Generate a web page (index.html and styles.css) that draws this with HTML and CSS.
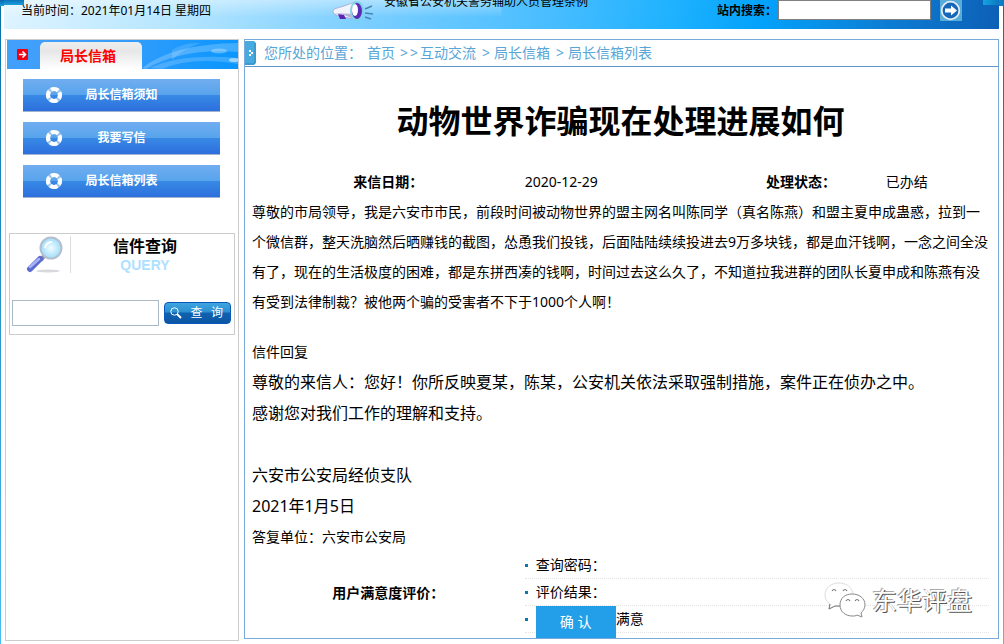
FILE: index.html
```html
<!DOCTYPE html>
<html lang="zh-CN">
<head>
<meta charset="utf-8">
<meta name="viewport" content="width=device-width, initial-scale=1">
<title>局长信箱</title>
<link rel="stylesheet" href="styles.css">
</head>
<body>
<div class="page">
  <header class="topbar">
    <span class="today">当前时间：2021年01月14日 星期四</span>
    <div class="notice">
      <svg class="horn" width="42" height="22" viewBox="0 0 42 22" aria-hidden="true">
        <path d="M2 9 Q0 11 2 14 L7 16 L22 19 L23 2 L12 6 Z" fill="#f3f3fb" stroke="#9aa0c8" stroke-width=".7"/>
        <path d="M2 13 L12 15 L22 19 L22 14 Z" fill="#b7b3d8"/>
        <path d="M6 14 L8 19 L14 19 L12 15Z" fill="#5a25b0"/>
        <ellipse cx="25" cy="11" rx="6" ry="9" fill="#5a2bb8" stroke="#7fd3e8" stroke-width="2"/>
        <ellipse cx="23" cy="10" rx="3" ry="6" fill="#fff"/>
        <path d="M33 9 L40 6 M33 13 L41 14 M33 17 L39 19" stroke="#4a86b4" stroke-width="1.6"/>
      </svg>
      <a class="headline" href="#">安徽省公安机关警务辅助人员管理条例</a>
    </div>
    <form class="site-search">
      <label for="site-q">站内搜索：</label>
      <input id="site-q" type="text">
      <button type="button" aria-label="搜索">
        <svg width="22" height="21" viewBox="0 0 22 21" aria-hidden="true">
          <rect width="22" height="21" fill="#58acd8"/>
          <circle cx="10.500" cy="10.500" r="8.800" fill="#1767b8" stroke="#e6eef6" stroke-width="1.800"/>
          <path d="M5 8.500h6V5.500l6 5-6 5v-3H5z" fill="#fff"/>
        </svg>
      </button>
    </form>
  </header>

  <div class="columns">
    <aside class="sidebar">
      <div class="side-head">
        <svg class="waves" viewBox="0 0 96 29" preserveAspectRatio="none" aria-hidden="true">
          <path d="M0 28 Q30 4 96 3 V12 Q40 8 4 29z" fill="#fff" opacity=".22"/>
          <path d="M8 28 Q40 13 96 18 V24 Q50 16 20 29z" fill="#fff" opacity=".18"/>
          <path d="M30 10 Q42 2 58 3 Q40 10 30 20z" fill="#fff" opacity=".14"/>
          <ellipse cx="77" cy="11" rx="8" ry="2.500" fill="#fff" opacity=".3"/>
          <ellipse cx="92" cy="20" rx="5" ry="2" fill="#fff" opacity=".5"/>
        </svg>
        <svg class="arrow" width="11" height="11" viewBox="0 0 11 11" aria-hidden="true">
          <rect width="11" height="11" rx="1" fill="#f00012"/>
          <path d="M2 5.500h6M5.500 2.500l3 3-3 3" fill="none" stroke="#fff" stroke-width="1.600"/>
        </svg>
        <h2 class="tab">局长信箱</h2>
      </div>
      <nav class="menu">
        <a href="#"><svg width="18" height="18" viewBox="0 0 18 18" aria-hidden="true"><circle cx="9" cy="9" r="6" fill="none" stroke="#9fc6ee" stroke-width="4.200"/><circle cx="9" cy="9" r="6" fill="none" stroke="#fff" stroke-width="4.200" stroke-dasharray="7.400 2.025" stroke-dashoffset="3.700"/></svg><span>局长信箱须知</span></a>
        <a href="#"><svg width="18" height="18" viewBox="0 0 18 18" aria-hidden="true"><circle cx="9" cy="9" r="6" fill="none" stroke="#9fc6ee" stroke-width="4.200"/><circle cx="9" cy="9" r="6" fill="none" stroke="#fff" stroke-width="4.200" stroke-dasharray="7.400 2.025" stroke-dashoffset="3.700"/></svg><span>我要写信</span></a>
        <a href="#"><svg width="18" height="18" viewBox="0 0 18 18" aria-hidden="true"><circle cx="9" cy="9" r="6" fill="none" stroke="#9fc6ee" stroke-width="4.200"/><circle cx="9" cy="9" r="6" fill="none" stroke="#fff" stroke-width="4.200" stroke-dasharray="7.400 2.025" stroke-dashoffset="3.700"/></svg><span>局长信箱列表</span></a>
      </nav>
      <form class="query">
        <div class="query-head">
          <svg width="40" height="40" viewBox="0 0 40 40" aria-hidden="true">
            <defs><radialGradient id="lens"><stop offset="0" stop-color="#f2fdff"/><stop offset="1" stop-color="#9fdcfa"/></radialGradient></defs>
            <ellipse cx="22" cy="35" rx="12" ry="1.500" fill="#d6d8dc"/>
            <path d="M18 20l-3 4" stroke="#8f9099" stroke-width="4"/>
            <path d="M14 23L4 33" stroke="#5c6bd0" stroke-width="6" stroke-linecap="round"/>
            <path d="M13 23L4 31" stroke="#a6b4f5" stroke-width="2.500" stroke-linecap="round"/>
            <circle cx="25" cy="12" r="10.500" fill="url(#lens)" stroke="#b4bfd0" stroke-width="2"/>
            <path d="M19 12q1-6 7-6" fill="none" stroke="#fff" stroke-width="2"/>
          </svg>
          <div class="query-title">
            <label for="letter-q">信件查询</label>
            <span>QUERY</span>
          </div>
        </div>
        <div class="query-row">
          <input id="letter-q" type="text">
          <button type="button">
            <svg width="12" height="12" viewBox="0 0 12 12" aria-hidden="true"><circle cx="4.500" cy="4.500" r="3.700" fill="none" stroke="#fff"/><path d="M7 7l4 4" stroke="#fff" stroke-width="2"/></svg>
            <span>查</span><span>询</span>
          </button>
        </div>
      </form>
    </aside>

    <main class="article">
      <nav class="crumbs">
        <svg width="11" height="24" viewBox="0 0 11 24" aria-hidden="true">
          <path d="M0 0h9l2 2v20l-2 2H0z" fill="#47abe0"/>
          <path d="M10 2v20l-1 1H0" fill="none" stroke="#3089bd"/>
          <path d="M4 9h2v2H4zM6 11h2v2H6zM4 13h2v2H4z" fill="#fff"/>
        </svg>
        <span class="where">您所处的位置：</span>
        <a class="home" href="#">首页</a><span class="sep first">&gt;</span><span class="sep">&gt;</span><a href="#">互动交流</a><span class="sep next">&gt;</span><a href="#">局长信箱</a><span class="sep next">&gt;</span><a href="#">局长信箱列表</a>
      </nav>

      <div class="letter">
        <h1>动物世界诈骗现在处理进展如何</h1>
        <table class="meta">
          <tr><th class="c-date">来信日期：</th><td class="c-value">2020-12-29</td><th class="c-state">处理状态：</th><td>已办结</td></tr>
        </table>
        <p class="body">尊敬的市局领导，我是六安市市民，前段时间被动物世界的盟主网名叫陈同学（真名陈燕）和盟主夏申成蛊惑，拉到一个微信群，整天洗脑然后晒赚钱的截图，怂恿我们投钱，后面陆陆续续投进去9万多块钱，都是血汗钱啊，一念之间全没有了，现在的生活极度的困难，都是东拼西凑的钱啊，时间过去这么久了，不知道拉我进群的团队长夏申成和陈燕有没有受到法律制裁？被他两个骗的受害者不下于1000个人啊！</p>
        <h2 class="reply-title">信件回复</h2>
        <div class="reply">
          <p>尊敬的来信人：您好！你所反映夏某，陈某，公安机关依法采取强制措施，案件正在侦办之中。</p>
          <p>感谢您对我们工作的理解和支持。</p>
          <p class="sign">六安市公安局经侦支队</p>
          <p>2021年1月5日</p>
        </div>
        <p class="unit">答复单位：六安市公安局</p>
        <div class="rating">
          <h3>用户满意度评价：</h3>
          <ul>
            <li>查询密码：</li>
            <li>评价结果：</li>
            <li><button type="button">确 认</button>满意</li>
          </ul>
        </div>
      </div>

      <div class="mark">
        <svg width="42" height="36" viewBox="0 0 42 36" aria-hidden="true">
          <path d="M15 1C7 1 1 6 1 13c0 4 2 7 5 9l-1 5 6-3c10 2 18-3 18-11S22 1 15 1z" fill="#fff" stroke="#ddd"/>
          <path d="M6 22l-1 5 6-3h5" fill="none" stroke="#777"/>
          <path d="M28 12c-7 0-12 4-12 11s6 11 12 11c2 0 4 0 5-1l5 2-1-4c2-2 4-5 4-8 0-7-6-11-13-11z" fill="#fff" stroke="#888"/>
          <path d="M8 9q2-3 4 0M19 9q2-3 4 0M22 19q2-3 4 0M31 19q2-3 4 0" fill="none" stroke="#777" stroke-width="1.200"/>
        </svg>
        <span>东华评盘</span>
      </div>
    </main>
  </div>
</div>
</body>
</html>
```
FILE: styles.css
```css
* { box-sizing: border-box; }
html, body { margin: 0; }
body {
  font: 14px/30px "Noto Sans", "Noto Sans CJK SC", sans-serif;
  color: #000;
  background: #fff;
}
h1, h2, h3, p, ul, form { margin: 0; padding: 0; }
a { color: inherit; text-decoration: none; }
svg { display: block; flex: none; }
button, input { font: inherit; margin: 0; padding: 0; }
button { cursor: pointer; }

.page {
  min-height: 100vh;
  padding: 0 5px 3px 4px;
  overflow: hidden;
  background:
    linear-gradient(#0a64b0, #1c9ddb) left top / 22px 6px no-repeat,
    linear-gradient(90deg, #12a4e0, #0d78c0) right top / 21px 6px no-repeat,
    linear-gradient(#0670a8, #47bdf3) left top / 1px 100% no-repeat,
    linear-gradient(#0670a8, #47bdf3) right top / 1px 100% no-repeat,
    #fff;
}

.topbar {
  display: flex;
  align-items: flex-start;
  height: 29px;
  padding: 0 37px 0 17px;
  font-size: 12px;
  line-height: 21px;
  overflow: hidden;
  background:
    linear-gradient(#0a74bb, #1c9ddb) left top / 20px 5px no-repeat,
    linear-gradient(90deg, #12a4e0, #0d78c0) right top / 16px 5px no-repeat,
    linear-gradient(rgba(255,255,255,.4), rgba(255,255,255,0) 60%) left top / 50% 100% no-repeat,
    linear-gradient(100deg, #dff4ff 0%, #b4e5ff 18%, #7fd0ff 35%, #48bdff 55%, #1fb2ff 67%, #03a2fb 76%, #0c7fd6 88%, #0d5fb5 100%);
}
.today { width: 311px; }
.notice { display: flex; flex: 1; gap: 10px; }
.headline { line-height: 3px; white-space: nowrap; }
.site-search { display: flex; align-items: flex-start; }
.site-search label { font-weight: bold; }
.site-search input {
  width: 153px;
  height: 20px;
  margin: 0 9px 0 1px;
  border: 1px solid #808080;
  background: #fff;
}
.site-search button { border: 0; background: none; }

.columns {
  display: flex;
  align-items: flex-start;
  gap: 5px;
  padding: 10px 0 0 1px;
}

.sidebar {
  width: 234px;
  min-height: 602px;
  border: 1px solid #ccc;
}
.side-head {
  position: relative;
  display: flex;
  align-items: center;
  gap: 12px;
  height: 29px;
  margin-left: 1px;
  padding-left: 10px;
  background: linear-gradient(100deg, #43a0fb, #359dfb 50%, #0796ff);
}
.waves { position: absolute; right: 0; top: 0; width: 96px; height: 29px; }
.tab {
  align-self: flex-end;
  width: 102px;
  padding-right: 6px;
  border-radius: 5px 5px 0 0;
  background: linear-gradient(#eee, #e7e7e7 35%, #fff);
  color: #f00;
  font-size: 14px;
  line-height: 27px;
  text-align: center;
}
.menu {
  display: grid;
  gap: 10px;
  padding: 10px 18px 0 17px;
}
.menu a {
  display: flex;
  align-items: center;
  height: 33px;
  padding-left: 22px;
  border-bottom: 1px solid #a3b2ce;
  background: linear-gradient(#71adf0, #57a4ec 50%, #388ae6 50%, #2d6fdd);
  color: #fff;
  font-size: 12px;
  font-weight: bold;
}
.menu span { width: 117px; text-align: center; }

.query {
  margin: 35px 3px 0 3px;
  padding: 2px 3px 8px 2px;
  border: 1px solid #ccc;
}
.query-head {
  display: flex;
  align-items: flex-start;
  padding-left: 14px;
}
.query-title {
  display: grid;
  flex: 1;
  margin-left: 4px;
  padding-right: 12px;
  border-left: 1px solid #ddd;
  text-align: center;
}
.query-title label { font-size: 16px; font-weight: bold; line-height: 21px; }
.query-title span { color: #b0e0ff; font: bold 14px/16px "Liberation Sans", sans-serif; }
.query-row {
  display: flex;
  align-items: center;
  gap: 5px;
  margin-top: 24px;
}
.query-row input {
  flex: 1;
  min-width: 0;
  height: 26px;
  border: 1px solid #a9b9c6;
  background: #fff;
}
.query-row button {
  display: flex;
  align-items: center;
  justify-content: space-between;
  width: 67px;
  height: 22px;
  padding: 0 7px 0 5px;
  border: 1px solid #0a59b8;
  border-radius: 4px;
  background: linear-gradient(#3da5e0, #2d8fd0 45%, #0f62af 50%, #0d56a4);
  color: #fff;
  font-size: 12px;
  line-height: 20px;
}

.article {
  position: relative;
  flex: 1;
  min-width: 0;
  border: 1px solid #78aadc;
}
.crumbs {
  display: flex;
  align-items: center;
  height: 27px;
  border-bottom: 1px solid #5d97d2;
  color: #58a5d8;
  line-height: 26px;
  white-space: nowrap;
}
.where { margin-left: 8px; }
.home { margin-left: 5px; }
.sep { width: 10px; }
.sep.first { margin-left: 5px; }
.sep.next { margin: 0 2px 0 6px; }

.letter { padding: 0 9px 5px 7px; }
h1 { margin: 30px 0 22px; font-size: 32px; line-height: 48px; text-align: center; }
.meta { width: 100%; table-layout: fixed; border-collapse: collapse; }
.meta th, .meta td { padding: 0; text-align: left; }
.meta th { text-align: center; }
.c-date { width: 37%; }
.c-value { width: 26%; }
.c-state { width: 23%; }
.reply-title { margin-top: 20px; font-size: 14px; font-weight: normal; }
.reply { font-size: 16px; line-height: 31px; }
.sign { margin-top: 31px; }

.rating { display: grid; grid-template-columns: 37fr 63fr; align-items: center; }
.rating h3 { font-size: 14px; text-align: center; }
.rating ul { list-style: none; }
.rating li {
  display: flex;
  align-items: flex-start;
  height: 27px;
  padding-left: 11px;
  border-bottom: 1px dotted #e4e4e4;
  background: linear-gradient(#0b78b0, #0b78b0) 0 12px / 3px 3px no-repeat;
  line-height: 26px;
}
.rating button {
  flex: none;
  width: 80px;
  height: 32px;
  border: 0;
  background: #229fe8;
  color: #fff;
  line-height: 32px;
}

.mark {
  position: absolute;
  right: 26px;
  bottom: 20px;
  display: flex;
  align-items: center;
  gap: 6px;
  color: #fff;
  font-size: 25px;
  line-height: 36px;
  text-shadow: 1px 1px 0 #555, -1px -1px 0 #aaa;
}
```
